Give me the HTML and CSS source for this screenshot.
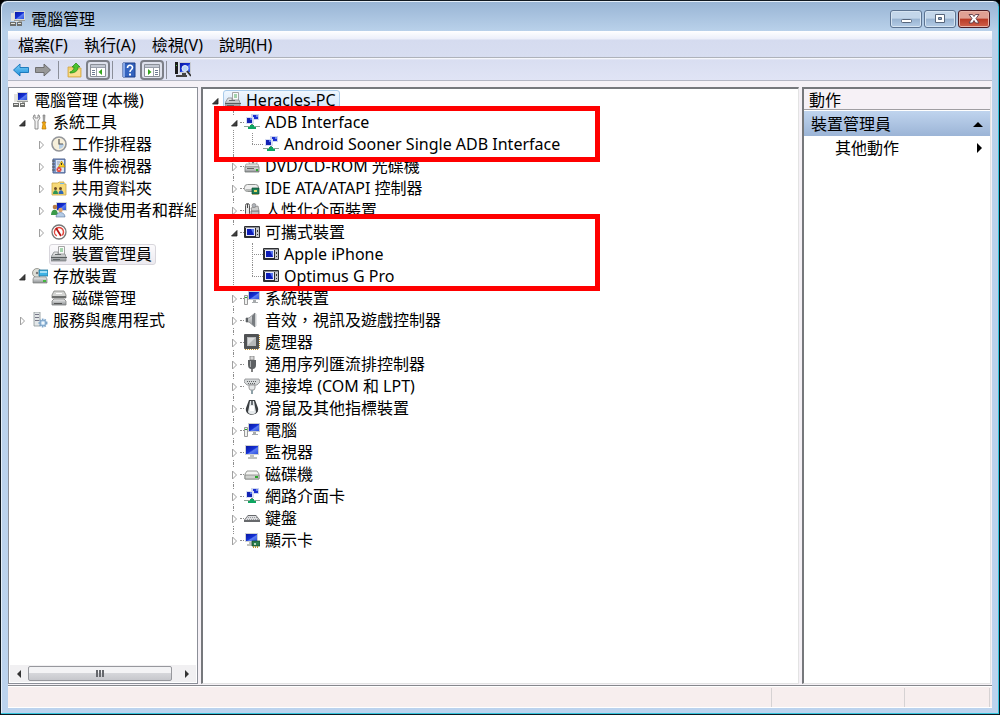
FILE: index.html
```html
<!DOCTYPE html>
<html lang="zh-Hant">
<head>
    <meta charset="UTF-8">
    <title>電腦管理</title>
    <link rel="stylesheet" href="styles.css">
</head>
<body>
<svg class="sprite" aria-hidden="true">
    <defs>
        <linearGradient id="screen" x1="0" y1="0" x2="1" y2="1">
            <stop offset="0" stop-color="#0a18a0"/>
            <stop offset=".5" stop-color="#1430d4"/>
            <stop offset=".6" stop-color="#5c7cf0"/>
            <stop offset="1" stop-color="#2a50e0"/>
        </linearGradient>
        <linearGradient id="metal" x1="0" y1="0" x2="0" y2="1">
            <stop offset="0" stop-color="#f2f2f2"/>
            <stop offset="1" stop-color="#8b8f92"/>
        </linearGradient>
        <linearGradient id="blueArrow" x1="0" y1="0" x2="0" y2="1">
            <stop offset="0" stop-color="#7fd0f7"/>
            <stop offset="1" stop-color="#1c8fdc"/>
        </linearGradient>
    </defs>
    <symbol id="i-manage" viewBox="0 0 16 16">
        <path d="M4 0h11v9H4z" fill="#d8dad6"/>
        <path d="M5 1h9v7H5z" fill="url(#screen)"/>
        <path d="M1 2h3v8H1z" fill="#e3e3dd"/>
        <path d="M4 9h11v1H4z" fill="#9a9c98"/>
        <path d="M9 10h3v1H9z" fill="#a8aaa6"/>
        <path d="M0 11h6v4H0zM7 11h5v4H7z" fill="#6d6f6c"/>
        <path d="M1 12h4v1H1zM8 12h3v1H8zM5 10h3v1H5z" fill="#e6e6e2"/>
    </symbol>
    <symbol id="i-tools" viewBox="0 0 16 16">
        <path d="M2 1L1 4l2 3v8h3V7l2-3-1-3-1 0v3H3V1z" fill="#f2f2f2" stroke="#777" stroke-width=".8"/>
        <path d="M11 1h2l-.5 7h-1z" fill="#aaa" stroke="#777" stroke-width=".6"/>
        <path d="M10 8h4l-1 2 1 5h-4l1-5z" fill="#f5ad14" stroke="#b97600" stroke-width=".7"/>
    </symbol>
    <symbol id="i-clock" viewBox="0 0 16 16">
        <circle cx="8" cy="8" r="7" fill="#f6efda" stroke="#94969a" stroke-width="1.600"/>
        <path d="M8 8h5A5 5 0 0 1 8 13z" fill="#b8d0e8"/>
        <path d="M8 3v5h4" fill="none" stroke="#555" stroke-width="1.200"/>
    </symbol>
    <symbol id="i-event" viewBox="0 0 16 16">
        <path d="M2 1h12v14H2z" fill="#7f9acb" stroke="#4c608f"/>
        <path d="M5 2h8v12H5z" fill="#dce6f5"/>
        <path d="M6 4h3M6 6h2" stroke="#8e9cb5"/>
        <path d="M1 3h3M1 6h3M1 9h3M1 12h3" stroke="#555"/>
        <path d="M10.500 3L14 9H7.500z" fill="#ffd42a" stroke="#b98b00" stroke-width=".7"/>
        <path d="M10.500 5v2" stroke="#333"/>
        <circle cx="8" cy="11.500" r="2.500" fill="#e0382e"/>
        <path d="M7 10.500l2 2M9 10.500l-2 2" stroke="#fff" stroke-width=".8"/>
    </symbol>
    <symbol id="i-share" viewBox="0 0 16 16">
        <path d="M1 3h6l1-1h5v2h2v11H1z" fill="#f6d978" stroke="#cda748" stroke-width=".8"/>
        <path d="M9 3h4v1H9z" fill="#6fb7e8"/>
        <circle cx="4.500" cy="8.500" r="1.500" fill="#6b4b26"/>
        <circle cx="9.500" cy="8.500" r="1.500" fill="#6b4b26"/>
        <path d="M2 14c0-5 5-5 5 0z" fill="#2f9555"/>
        <path d="M7.500 14c0-5 5-5 5 0z" fill="#2e68b8"/>
    </symbol>
    <symbol id="i-users" viewBox="0 0 16 16">
        <path d="M5 0h11v9H5z" fill="#d5d8d4"/>
        <path d="M6 1h9v7H6z" fill="url(#screen)"/>
        <circle cx="4" cy="5" r="2.300" fill="#b87d45"/>
        <circle cx="9.500" cy="8" r="2.200" fill="#dba26c"/>
        <path d="M0 13c0-7 7-7 7 0z" fill="#3b9a4a"/>
        <path d="M5 15c0-6 9-6 9 0z" fill="#b4cbe6" stroke="#49658d" stroke-width=".5"/>
    </symbol>
    <symbol id="i-perf" viewBox="0 0 16 16">
        <circle cx="8" cy="8" r="7" fill="#fff" stroke="#777" stroke-width="1.300"/>
        <circle cx="8" cy="8" r="4.500" fill="none" stroke="#e0473e" stroke-width="1.500" stroke-dasharray="22 7" transform="rotate(120 8 8)"/>
        <path d="M5 4l5 8" stroke="#b31414" stroke-width="1.800"/>
    </symbol>
    <symbol id="i-device" viewBox="0 0 16 16">
        <path d="M7.500 .5h6v8h-6z" fill="#fafafa" stroke="#a5a5a5"/>
        <path d="M9 2h3v4H9z" fill="#a4d3ad"/>
        <path d="M3 6h4v2h7l1 3v4H0v-4z" fill="url(#metal)" stroke="#85888a" stroke-width=".8"/>
        <path d="M0 11h16v1H0z" fill="#5a5e60"/>
        <path d="M4 8h6v1H4zM2 13h7v1H2z" fill="#666a6c"/>
    </symbol>
    <symbol id="i-storage" viewBox="0 0 16 16">
        <circle cx="5" cy="5" r="4.500" fill="#dedfd8" stroke="#84857f" stroke-width=".8"/>
        <circle cx="5" cy="5" r="1.200" fill="#777"/>
        <path d="M7 2h9v6H7z" fill="#3fb2e4" stroke="#23749b" stroke-width=".8"/>
        <path d="M8 3h7v2H8z" fill="#a3def5"/>
        <path d="M2 9h12l1 2v4H1v-4z" fill="url(#metal)" stroke="#7f8280" stroke-width=".7"/>
        <path d="M11 12h3v2h-3z" fill="#42b83c"/>
    </symbol>
    <symbol id="i-disk" viewBox="0 0 16 16">
        <path d="M3 1h10l2 4v3H1V5z" fill="#d4d5d3" stroke="#80817f" stroke-width=".8"/>
        <path d="M1 6h14v2H1z" fill="#6d6f6e"/>
        <path d="M3 9h10l2 2v4H1v-4z" fill="url(#metal)" stroke="#7c7e7d" stroke-width=".8"/>
        <path d="M3 13h8v1H3z" fill="#555"/>
        <path d="M5 3h6v1H5z" fill="#fff"/>
    </symbol>
    <symbol id="i-service" viewBox="0 0 16 16">
        <path d="M2 0h6v14H2z" fill="#e3e7e8" stroke="#8b9498" stroke-width=".8"/>
        <path d="M3 2h4v1H3zM3 5h4v1H3zM3 8h4v1H3z" fill="#778"/>
        <circle cx="11" cy="11" r="3.500" fill="#c4ddf1" stroke="#7ea5c9" stroke-width="2" stroke-dasharray="1.500 1"/>
        <circle cx="11" cy="11" r="2.800" fill="#c4ddf1" stroke="#6d97bf" stroke-width=".8"/>
        <circle cx="11" cy="11" r="1" fill="#fff"/>
    </symbol>
    <symbol id="i-net" viewBox="0 0 16 16">
        <path d="M7 0h8v6H7z" fill="#ccd4ee"/>
        <path d="M9 1h5v4H9z" fill="#1a2fd0"/>
        <path d="M12 1h2v2h-2z" fill="#6d86f0"/>
        <path d="M2 3h8v7H2z" fill="#d6dcf2"/>
        <path d="M3 4h5v5H3z" fill="#1222b4"/>
        <path d="M6 4h2v2H6z" fill="#5c78ee"/>
        <path d="M7 10h2v1H7z" fill="#6d8a7a"/>
        <path d="M0 12h16v1H0z" fill="#8ba595"/>
        <path d="M6 11h4v2h2v2H4v-2h2z" fill="#0da661"/>
    </symbol>
    <symbol id="i-dvd" viewBox="0 0 16 16">
        <circle cx="9" cy="4.500" r="4" fill="#eeeeea" stroke="#9b9d99" stroke-width=".8"/>
        <circle cx="9" cy="4.500" r="1" fill="#666"/>
        <path d="M2 6h12l1 3H1z" fill="#e4e5e3" stroke="#939592" stroke-width=".7"/>
        <path d="M1 9h14v5H1z" fill="url(#metal)" stroke="#707371" stroke-width=".8"/>
        <path d="M3 10h7v1H3z" fill="#666"/>
        <path d="M12 11h2v2h-2z" fill="#31ab2e"/>
    </symbol>
    <symbol id="i-ide" viewBox="0 0 16 16">
        <rect x=".5" y="4.500" width="14" height="7" rx="3" fill="#eee" stroke="#8c8f8d"/>
        <path d="M2 9h8v2H2z" fill="#b5b8b6"/>
        <path d="M8 8h7v6H8z" fill="#1e7f57" stroke="#0b4932" stroke-width=".7"/>
        <path d="M10 10h3v2h-3z" fill="#e3d765"/>
        <path d="M9 14v1M11 14v1M13 14v1" stroke="#b5942e"/>
    </symbol>
    <symbol id="i-hid" viewBox="0 0 16 16">
        <path d="M7 6l7-2 1 5-7 1z" fill="#ccc" stroke="#888" stroke-width=".8"/>
        <rect x="1.500" y="1.500" width="4" height="12" rx="2" fill="#e8e8e8" stroke="#555"/>
        <path d="M3 2h1v4H3z" fill="#444"/>
        <path d="M7 9h8v5H7z" fill="#a9acb0" stroke="#6b6b6b" stroke-width=".7"/>
        <path d="M8 11h6M8 13h6" stroke="#eee" stroke-width=".7"/>
        <circle cx="10" cy="3.500" r="2" fill="#b0b4ba" stroke="#777" stroke-width=".6"/>
    </symbol>
    <symbol id="i-portable" viewBox="0 0 16 16">
        <rect x="0" y="2" width="16" height="12" rx="1" fill="#2d2e32"/>
        <path d="M1 3h14v1H1z" fill="#8d8f94"/>
        <path d="M2 4h9v8H2z" fill="#e8eafa"/>
        <path d="M3 5h7v6H3z" fill="#0d1cb8"/>
        <path d="M7 5h3v6z" fill="#5877ee"/>
        <path d="M12 4h3v9h-3z" fill="#c5c6c8"/>
        <path d="M13 6h1v2h-1zM13 10h1v1h-1z" fill="#333"/>
    </symbol>
    <symbol id="i-system" viewBox="0 0 16 16">
        <path d="M4 1h12v9H4z" fill="#c9ccd0"/>
        <path d="M5 2h10v7H5z" fill="url(#screen)"/>
        <path d="M9 10h3v2h2v1H8v-1h1z" fill="#a7abad"/>
        <path d="M.5 5.500h3v9h-3z" fill="#f0f1ef" stroke="#999"/>
        <path d="M1 7h2v1H1z" fill="#25a52b"/>
    </symbol>
    <symbol id="i-sound" viewBox="0 0 16 16">
        <path d="M2 6h3l6-5v14l-6-5H2z" fill="url(#metal)" stroke="#808386" stroke-width=".8"/>
        <path d="M8 4v8l3 3V1z" fill="#777b7f"/>
        <path d="M2 6h2v4H2z" fill="#5c6064"/>
        <path d="M12 2v12" stroke="#c9cccf"/>
    </symbol>
    <symbol id="i-cpu" viewBox="0 0 16 16">
        <path d="M1 15.500h14M15.500 1v14" stroke="#c29332" stroke-dasharray="1 1"/>
        <rect x="0" y="0" width="15" height="15" rx="1" fill="#505254"/>
        <path d="M3 3h9v9H3z" fill="#b7b9ba"/>
        <path d="M4 4h7L4 11z" fill="#dadbdc"/>
    </symbol>
    <symbol id="i-usb" viewBox="0 0 16 16">
        <path d="M6 0h4v4H6z" fill="#d6d6d6" stroke="#7d7d7d" stroke-width=".8"/>
        <path d="M4 4h8v5c0 3-2 4-3 4H7c-1 0-3-1-3-4z" fill="#5e6163"/>
        <path d="M6 5h1v6H6z" fill="#a9acae"/>
        <path d="M8 13v3" stroke="#555" stroke-width="1.500"/>
    </symbol>
    <symbol id="i-port" viewBox="0 0 16 16">
        <path d="M1 1h14l1 3-3 3H3L0 4z" fill="#d5d8d9" stroke="#8b8e90" stroke-width=".8"/>
        <path d="M3 3.500h10M4 5.500h8" stroke="#5d6062" stroke-dasharray="1 1"/>
        <path d="M5 7h6v3l-1 2H6l-1-2z" fill="#e5e7e8" stroke="#888" stroke-width=".8"/>
        <path d="M8 12v4" stroke="#8ea1a8" stroke-width="2"/>
    </symbol>
    <symbol id="i-mouse" viewBox="0 0 16 16">
        <path d="M5 0h6l3 8c2 9-14 9-12 0z" fill="#3a3e41"/>
        <path d="M6 1h4l1 6 1 5c-1 3-7 3-8 0l1-5z" fill="#e6eaec"/>
        <path d="M7 1h2v4H7z" fill="#6b7074"/>
        <path d="M6 6h4v5H6z" fill="#fff"/>
    </symbol>
    <symbol id="i-monitor" viewBox="0 0 16 16">
        <path d="M1 1h14v10H1z" fill="#cfd2d4"/>
        <path d="M2 2h12v8H2z" fill="url(#screen)"/>
        <path d="M6 11h4v2h3v2H4v-2h2z" fill="#bfc2bf"/>
    </symbol>
    <symbol id="i-drive" viewBox="0 0 16 16">
        <path d="M3 5h10l2 3v5H1V8z" fill="#f4f4f2" stroke="#8f928f" stroke-width=".9"/>
        <path d="M1 9h14v4H1z" fill="#cfd1ce" stroke="#777a77" stroke-width=".7"/>
        <path d="M11 10h3v2h-3z" fill="#2ba629"/>
    </symbol>
    <symbol id="i-keyboard" viewBox="0 0 16 16">
        <path d="M4 5h8l4 5v2H0v-2z" fill="#67696c"/>
        <path d="M4 6h8l3 4H1z" fill="#dcdde0"/>
        <path d="M4 7.500h9M3 9.500h11" stroke="#97999c" stroke-dasharray="1 1"/>
    </symbol>
    <symbol id="i-display" viewBox="0 0 16 16">
        <path d="M1 1h13v9H1z" fill="#cfd2d4"/>
        <path d="M2 2h11v7H2z" fill="url(#screen)"/>
        <path d="M5 10h4v2h2v2H3v-2h2z" fill="#bfc2bf"/>
        <path d="M8 9h8v5H8z" fill="#2b7d4d" stroke="#124a2a" stroke-width=".7"/>
        <path d="M10 11h2v2h-2z" fill="#b8d7c0"/>
        <path d="M9.500 14v2M11.500 14v2M13.500 14v2" stroke="#b5942e"/>
    </symbol>
    <symbol id="i-back" viewBox="0 0 16 16">
        <path d="M.5 8L7 2v3.500h8.500v5H7V14z" fill="url(#blueArrow)" stroke="#1273b8" stroke-width=".9"/>
    </symbol>
    <symbol id="i-forward" viewBox="0 0 16 16">
        <path d="M15.500 8L9 2v3.500H.5v5H9V14z" fill="#989898" stroke="#666" stroke-width=".9"/>
    </symbol>
    <symbol id="i-up" viewBox="0 0 16 16">
        <path d="M1 5h5l1 1h7v9H1z" fill="#f3cf6f" stroke="#d0a544" stroke-width=".8"/>
        <path d="M2 8h11v6H2z" fill="#f9df91"/>
        <path d="M3 10c3-1 4-3 4-5H5l4-4 4 4h-2c0 4-3 6-8 6z" fill="#4dc22e" stroke="#238815" stroke-width=".7"/>
    </symbol>
    <symbol id="i-tree-pane" viewBox="0 0 16 16">
        <path d="M.5 2.500h15v12H.5z" fill="#fff" stroke="#8a8f98"/>
        <path d="M1 3h14v2H1z" fill="#c3c8d2"/>
        <path d="M6.500 6v8M1 5.500h14" stroke="#9aa0ab"/>
        <path d="M2 8.500h3M2 10.500h3M2 12.500h3" stroke="#6c7a92"/>
        <path d="M12 7v6L8.500 10z" fill="#36a51e"/>
    </symbol>
    <symbol id="i-action-pane" viewBox="0 0 16 16">
        <path d="M.5 2.500h15v12H.5z" fill="#fff" stroke="#8a8f98"/>
        <path d="M1 3h14v2H1z" fill="#c3c8d2"/>
        <path d="M9.500 6v8M1 5.500h14" stroke="#9aa0ab"/>
        <path d="M11 8.500h3M11 10.500h3M11 12.500h3" stroke="#6c7a92"/>
        <path d="M4 7v6l3.500-3z" fill="#36a51e"/>
    </symbol>
    <symbol id="i-help" viewBox="0 0 16 16">
        <path d="M2 1h12v14H2z" fill="#3463bf" stroke="#1d3e8a"/>
        <path d="M2 1h2v14H2z" fill="#86a7e6"/>
        <path d="M6.500 6c0-3.500 5-3.500 5-.5C11.500 8 9 7.500 9 10" fill="none" stroke="#fff" stroke-width="1.600"/>
        <path d="M8 11.500h2v2H8z" fill="#fff"/>
    </symbol>
    <symbol id="i-scan" viewBox="0 0 16 16">
        <path d="M0 0h3v12H0z" fill="#1c1c1c"/>
        <path d="M1 3h1v1H1z" fill="#4ec24b"/>
        <path d="M4 0h12v11H4z" fill="#c9ccd4"/>
        <path d="M5 1h10v9H5z" fill="url(#screen)"/>
        <path d="M1 13h11v2H1zM7 11h4v2H7z" fill="#444"/>
        <circle cx="10" cy="6.500" r="3" fill="#b9d5f6" stroke="#e9eef6"/>
        <path d="M12 9l4 5" stroke="#333" stroke-width="1.800"/>
    </symbol>
    <symbol id="i-open" viewBox="0 0 8 8">
        <path d="M7 1.500V7H1.500z" fill="#404040" stroke="#1e1e1e" stroke-width=".8"/>
    </symbol>
    <symbol id="i-closed" viewBox="0 0 8 8">
        <path d="M2.500 0v8l4-4z" fill="#fff" stroke="#a0a0a0"/>
    </symbol>
</svg>

<div class="window">
    <header class="titlebar">
        <svg class="icon"><use href="#i-manage"/></svg>
        <h1>電腦管理</h1>
        <div class="controls">
            <button aria-label="最小化"><svg viewBox="0 0 14 10"><rect x="2.500" y="5.500" width="10" height="3" rx="1" fill="#fff" stroke="#56657b"/></svg></button>
            <button aria-label="最大化"><svg viewBox="0 0 14 10"><path d="M2.500.5h9v8h-9z" fill="#fff" stroke="#56657b"/><path d="M5.500 3.500h3v2h-3z" fill="#8aa4c4" stroke="#56657b"/></svg></button>
            <button class="close" aria-label="關閉"><svg viewBox="0 0 14 10"><path d="M2 .5h3.500L7 2.500 8.500.5H12L9 4.500l3 4.500H8.500L7 6.500 5.500 9H2l3-4.500z" fill="#fff" stroke="#5c3a46" stroke-width=".9"/></svg></button>
        </div>
    </header>

    <main class="client">
        <nav class="menubar">
            <button>檔案(F)</button>
            <button>執行(A)</button>
            <button>檢視(V)</button>
            <button>說明(H)</button>
        </nav>
        <div class="toolbar">
            <button aria-label="上一頁"><svg class="icon"><use href="#i-back"/></svg></button>
            <button aria-label="下一頁"><svg class="icon"><use href="#i-forward"/></svg></button>
            <span class="sep"></span>
            <button aria-label="往上一層"><svg class="icon"><use href="#i-up"/></svg></button>
            <button class="pressed" aria-label="顯示主控台樹狀目錄"><svg class="icon"><use href="#i-tree-pane"/></svg></button>
            <span class="sep"></span>
            <button aria-label="說明"><svg class="icon"><use href="#i-help"/></svg></button>
            <button class="pressed" aria-label="顯示執行窗格"><svg class="icon"><use href="#i-action-pane"/></svg></button>
            <span class="sep"></span>
            <button aria-label="掃描硬體變更"><svg class="icon"><use href="#i-scan"/></svg></button>
        </div>

        <div class="panes">
            <section class="pane console">
                <ul class="tree">
                    <li>
                        <div class="row root"><svg class="icon"><use href="#i-manage"/></svg><span>電腦管理 (本機)</span></div>
                        <ul>
                            <li>
                                <div class="row"><svg class="twist"><use href="#i-open"/></svg><svg class="icon"><use href="#i-tools"/></svg><span>系統工具</span></div>
                                <ul>
                                    <li class="row"><svg class="twist"><use href="#i-closed"/></svg><svg class="icon"><use href="#i-clock"/></svg><span>工作排程器</span></li>
                                    <li class="row"><svg class="twist"><use href="#i-closed"/></svg><svg class="icon"><use href="#i-event"/></svg><span>事件檢視器</span></li>
                                    <li class="row"><svg class="twist"><use href="#i-closed"/></svg><svg class="icon"><use href="#i-share"/></svg><span>共用資料夾</span></li>
                                    <li class="row"><svg class="twist"><use href="#i-closed"/></svg><svg class="icon"><use href="#i-users"/></svg><span>本機使用者和群組</span></li>
                                    <li class="row"><svg class="twist"><use href="#i-closed"/></svg><svg class="icon"><use href="#i-perf"/></svg><span>效能</span></li>
                                    <li class="row leaf"><div class="selected"><svg class="icon"><use href="#i-device"/></svg><span>裝置管理員</span></div></li>
                                </ul>
                            </li>
                            <li>
                                <div class="row"><svg class="twist"><use href="#i-open"/></svg><svg class="icon"><use href="#i-storage"/></svg><span>存放裝置</span></div>
                                <ul>
                                    <li class="row leaf"><svg class="icon"><use href="#i-disk"/></svg><span>磁碟管理</span></li>
                                </ul>
                            </li>
                            <li class="row"><svg class="twist"><use href="#i-closed"/></svg><svg class="icon"><use href="#i-service"/></svg><span>服務與應用程式</span></li>
                        </ul>
                    </li>
                </ul>
                <div class="scrollbar">
                    <button aria-label="向左捲動"><svg viewBox="0 0 8 8"><path d="M6 0v8L2 4z" fill="#333"/></svg></button>
                    <div class="track"><div class="thumb"><i></i><i></i><i></i></div></div>
                    <button aria-label="向右捲動"><svg viewBox="0 0 8 8"><path d="M2 0v8l4-4z" fill="#333"/></svg></button>
                </div>
            </section>

            <section class="pane devices">
                <ul class="tree">
                    <li>
                        <div class="row"><svg class="twist"><use href="#i-open"/></svg><div class="selected host"><svg class="icon"><use href="#i-device"/></svg><span>Heracles-PC</span></div></div>
                        <ul class="lines">
                            <li>
                                <div class="row"><svg class="twist"><use href="#i-open"/></svg><svg class="icon"><use href="#i-net"/></svg><span>ADB Interface</span></div>
                                <ul class="lines">
                                    <li class="row leaf"><svg class="icon"><use href="#i-net"/></svg><span>Android Sooner Single ADB Interface</span></li>
                                </ul>
                            </li>
                            <li class="row"><svg class="twist"><use href="#i-closed"/></svg><svg class="icon"><use href="#i-dvd"/></svg><span>DVD/CD-ROM 光碟機</span></li>
                            <li class="row"><svg class="twist"><use href="#i-closed"/></svg><svg class="icon"><use href="#i-ide"/></svg><span>IDE ATA/ATAPI 控制器</span></li>
                            <li class="row"><svg class="twist"><use href="#i-closed"/></svg><svg class="icon"><use href="#i-hid"/></svg><span>人性化介面裝置</span></li>
                            <li>
                                <div class="row"><svg class="twist"><use href="#i-open"/></svg><svg class="icon"><use href="#i-portable"/></svg><span>可攜式裝置</span></div>
                                <ul class="lines">
                                    <li class="row leaf"><svg class="icon"><use href="#i-portable"/></svg><span>Apple iPhone</span></li>
                                    <li class="row leaf"><svg class="icon"><use href="#i-portable"/></svg><span>Optimus G Pro</span></li>
                                </ul>
                            </li>
                            <li class="row"><svg class="twist"><use href="#i-closed"/></svg><svg class="icon"><use href="#i-system"/></svg><span>系統裝置</span></li>
                            <li class="row"><svg class="twist"><use href="#i-closed"/></svg><svg class="icon"><use href="#i-sound"/></svg><span>音效，視訊及遊戲控制器</span></li>
                            <li class="row"><svg class="twist"><use href="#i-closed"/></svg><svg class="icon"><use href="#i-cpu"/></svg><span>處理器</span></li>
                            <li class="row"><svg class="twist"><use href="#i-closed"/></svg><svg class="icon"><use href="#i-usb"/></svg><span>通用序列匯流排控制器</span></li>
                            <li class="row"><svg class="twist"><use href="#i-closed"/></svg><svg class="icon"><use href="#i-port"/></svg><span>連接埠 (COM 和 LPT)</span></li>
                            <li class="row"><svg class="twist"><use href="#i-closed"/></svg><svg class="icon"><use href="#i-mouse"/></svg><span>滑鼠及其他指標裝置</span></li>
                            <li class="row"><svg class="twist"><use href="#i-closed"/></svg><svg class="icon"><use href="#i-system"/></svg><span>電腦</span></li>
                            <li class="row"><svg class="twist"><use href="#i-closed"/></svg><svg class="icon"><use href="#i-monitor"/></svg><span>監視器</span></li>
                            <li class="row"><svg class="twist"><use href="#i-closed"/></svg><svg class="icon"><use href="#i-drive"/></svg><span>磁碟機</span></li>
                            <li class="row"><svg class="twist"><use href="#i-closed"/></svg><svg class="icon"><use href="#i-net"/></svg><span>網路介面卡</span></li>
                            <li class="row"><svg class="twist"><use href="#i-closed"/></svg><svg class="icon"><use href="#i-keyboard"/></svg><span>鍵盤</span></li>
                            <li class="row"><svg class="twist"><use href="#i-closed"/></svg><svg class="icon"><use href="#i-display"/></svg><span>顯示卡</span></li>
                        </ul>
                    </li>
                </ul>
                <div class="mark mark-adb"></div>
                <div class="mark mark-portable"></div>
            </section>

            <aside class="pane actions">
                <h2>動作</h2>
                <button class="group"><span>裝置管理員</span><svg viewBox="0 0 10 6"><path d="M0 6l5-5 5 5z"/></svg></button>
                <button class="more"><span>其他動作</span><svg viewBox="0 0 6 10"><path d="M0 0l5 5-5 5z"/></svg></button>
            </aside>
        </div>

        <footer class="statusbar">
            <div></div>
            <div></div>
            <div></div>
        </footer>
    </main>
</div>
</body>
</html>
```
FILE: styles.css
```css
* {
    box-sizing: border-box;
}

body {
    margin: 0;
    background: #000;
    color: #000;
    font: 16px/22px "Noto Sans", "Noto Sans CJK TC", sans-serif;
}

button {
    padding: 0;
    border: 0;
    background: none;
    color: inherit;
    font: inherit;
}

h1, h2 {
    margin: 0;
    font-size: 16px;
    font-weight: normal;
}

ul {
    margin: 0;
    padding: 0;
    list-style: none;
}

.sprite {
    position: absolute;
    width: 0;
    height: 0;
}

.icon {
    width: 16px;
    height: 16px;
    flex: none;
}

/* window frame */
.window {
    display: flex;
    flex-direction: column;
    height: 100vh;
    padding: 0 7px 6px;
    border: 1px solid #101820;
    border-radius: 7px 7px 0 0;
    background: linear-gradient(#98b4d4, #b9d1ea 30px, #bcd3ee);
    box-shadow: inset -1px -1px 0 #35c4dc, inset 1px 1px 0 #e4eef8;
}

.titlebar {
    display: flex;
    align-items: center;
    height: 30px;
    padding: 6px 2px 0;
}

.titlebar h1 {
    flex: 1;
    margin-left: 5px;
}

.controls {
    display: flex;
    gap: 2px;
}

.controls button {
    display: flex;
    align-items: center;
    justify-content: center;
    width: 32px;
    height: 18px;
    border: 1px solid #5c7391;
    border-radius: 3px;
    background: linear-gradient(#c3d6ea 45%, #98b3d1 50%, #b4cce6);
    box-shadow: inset 0 0 0 1px #d6e4f2;
}

.controls svg {
    width: 14px;
    height: 10px;
}

.controls .close {
    border-color: #4c1c24;
    background: linear-gradient(#e0a093 45%, #b93a25 50%, #d0614a);
    box-shadow: inset 0 0 0 1px #e8b4a8;
}

.client {
    display: flex;
    flex: 1;
    flex-direction: column;
    min-height: 0;
    background: #f5f1f6;
}

.menubar {
    display: flex;
    height: 27px;
    padding: 2px 2px 0;
    border-bottom: 1px solid #aeb2ba;
    background: linear-gradient(#fff, #eceffa 8px, #d5dbef 9px, #d8def1);
}

.menubar button {
    padding: 0 8px;
}

.toolbar {
    display: flex;
    align-items: center;
    height: 23px;
    padding: 2px 2px 0;
    border-bottom: 1px solid #b3b6c3;
    background: linear-gradient(#fff, #d9def1 2px, #e0e4f5);
}

.toolbar button {
    display: flex;
    align-items: center;
    justify-content: center;
    width: 22px;
    height: 20px;
}

.toolbar .pressed {
    width: 24px;
    border: 2px solid #7c7f88;
    border-radius: 4px;
    background: #dee1ec;
}

.sep {
    width: 1px;
    height: 18px;
    margin: 0 5px 0 4px;
    background: #8b8e99;
}

.pressed + .sep {
    margin-left: 2px;
}

/* three panes */
.panes {
    display: grid;
    flex: 1;
    grid-template-columns: 190px 1fr 189px;
    gap: 3px;
    min-height: 0;
    padding: 6px 1px 0 0;
}

.pane {
    position: relative;
    min-width: 0;
    border: 1px solid #8c8f98;
    background: #fff;
}

.console {
    display: flex;
    flex-direction: column;
    overflow: hidden;
    padding: 1px;
}

.console .tree {
    flex: 1;
    overflow: hidden;
    padding-left: 3px;
}

.devices,
.actions {
    border-width: 2px 1px 1px 2px;
    border-color: #76787c #e3e3e3 #e3e3e3 #76787c;
}

.devices .tree {
    padding-left: 3px;
}

.row {
    display: flex;
    align-items: center;
    height: 22px;
    white-space: nowrap;
}

.row span {
    margin-left: 5px;
}

.twist {
    flex: none;
    width: 8px;
    height: 14px;
    margin: 2px 6px 0 5px;
    padding: 3px 0;
}

.tree ul ul {
    padding-left: 19px;
}

.leaf {
    padding-left: 19px;
}

.devices .tree ul {
    padding-left: 19px;
}

.selected {
    display: flex;
    align-items: center;
    height: 21px;
    margin-left: -2px;
    padding: 0 3px 0 1px;
    border: 1px solid #d8d6dc;
    border-radius: 3px;
    background: linear-gradient(#fbfafc, #eceaf0);
}

.host {
    border-color: #a9cbea;
    background: linear-gradient(#f0f7fe, #cfe3f9);
}

/* dotted connectors of the device tree */
.lines > li {
    position: relative;
}

.lines > li::before {
    position: absolute;
    top: 0;
    bottom: 0;
    left: 8px;
    border-left: 1px dotted #8e8e8e;
    content: "";
}

.lines > li::after {
    position: absolute;
    top: 11px;
    left: 15px;
    width: 4px;
    border-top: 1px dotted #8e8e8e;
    content: "";
}

.lines > .leaf::after {
    left: 8px;
    width: 11px;
}

.lines > li:last-child::before {
    bottom: 11px;
}

.lines .twist {
    position: relative;
    z-index: 1;
    background: #fff;
}

.mark {
    position: absolute;
    z-index: 2;
    left: 11px;
    width: 386px;
    border: 5px solid #f00;
}

.mark-adb {
    top: 17px;
    height: 56px;
}

.mark-portable {
    top: 125px;
    height: 77px;
}

.scrollbar {
    display: flex;
    height: 17px;
    background: #f1f0f2;
}

.scrollbar button {
    width: 18px;
}

.scrollbar svg {
    display: block;
    width: 8px;
    height: 8px;
    margin: auto;
}

.track {
    flex: 1;
}

.thumb {
    display: flex;
    align-items: center;
    justify-content: center;
    gap: 1px;
    width: 96%;
    height: 15px;
    margin-top: 1px;
    border: 1px solid #97989d;
    border-radius: 2px;
    background: linear-gradient(#f3f3f5 45%, #d5d6da 50%, #c6c7cc);
}

.thumb i {
    width: 2px;
    height: 7px;
    background: #66686d;
}

/* action pane */
.actions h2 {
    height: 21px;
    padding-left: 5px;
    border-bottom: 1px solid #a09ea2;
    background: #f6f1f6;
}

.actions button {
    display: flex;
    align-items: center;
    justify-content: space-between;
    width: 100%;
    height: 24px;
}

.actions .group {
    height: 25px;
    margin-top: 1px;
    padding: 0 7px;
    background: linear-gradient(#c0d4ee, #9bb4d6);
}

.group svg {
    width: 10px;
    height: 6px;
}

.actions .more {
    padding: 0 7px 0 31px;
}

.more svg {
    width: 6px;
    height: 10px;
}

.statusbar {
    display: grid;
    grid-template-columns: 1fr 133px 85px;
    height: 23px;
    margin-top: 1px;
    padding-right: 2px;
    border-top: 1px solid #85878c;
    border-bottom: 1px solid #fff;
    background: #f7eeee;
    box-shadow: inset 0 1px 0 #fff;
}

.statusbar div {
    margin-top: 2px;
    border-right: 1px solid #d6d2d3;
}
```
